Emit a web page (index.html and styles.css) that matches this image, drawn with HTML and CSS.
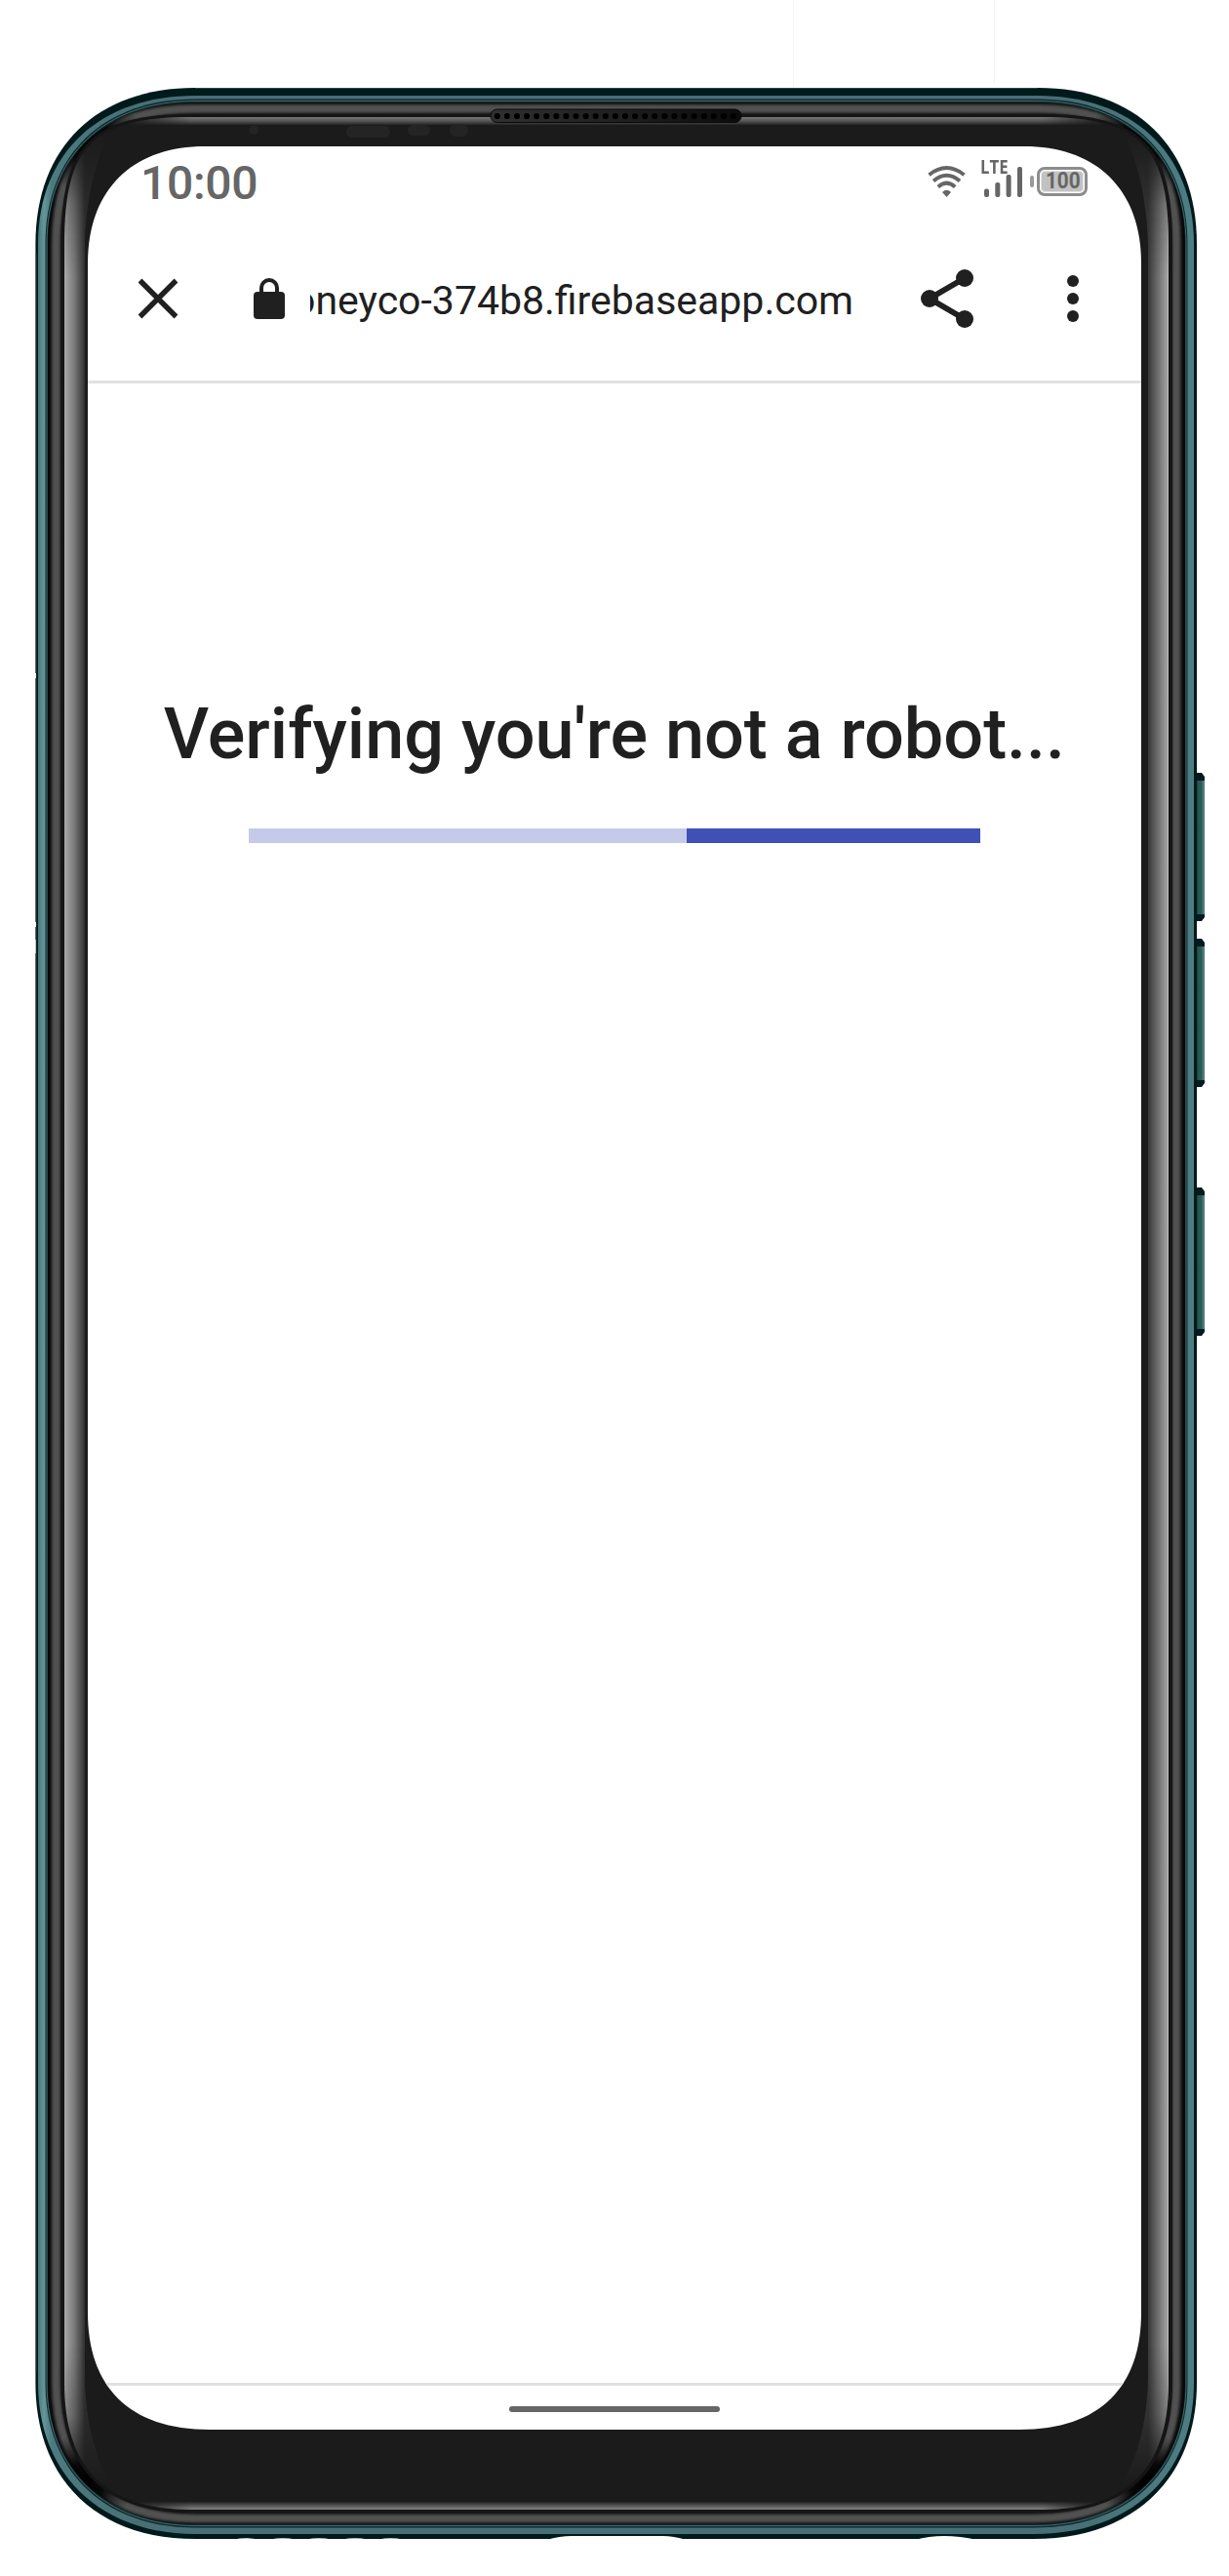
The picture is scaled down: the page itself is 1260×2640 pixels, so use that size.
FILE: index.html
```html
<!DOCTYPE html>
<html lang="en">
<head>
<meta charset="utf-8">
<title>Verification</title>
<link rel="stylesheet" href="styles.css">
</head>
<body>
<div class="stage">
  <svg class="device" viewBox="0 0 1260 2640" aria-hidden="true">
    <defs>
      <linearGradient id="teal" gradientUnits="userSpaceOnUse" x1="39" y1="0" x2="1224" y2="0">
        <stop offset="0" stop-color="#48777c"/><stop offset=".005" stop-color="#659599"/><stop offset=".012" stop-color="#4c7a7f"/><stop offset=".09" stop-color="#476f75"/><stop offset=".9" stop-color="#476f75"/><stop offset="1" stop-color="#4d7e84"/>
      </linearGradient>
      <linearGradient id="sideL" gradientUnits="userSpaceOnUse" x1="66" y1="0" x2="87" y2="0">
        <stop offset="0" stop-color="#aaa"/><stop offset=".5" stop-color="#777"/><stop offset="1" stop-color="#303030"/>
      </linearGradient>
      <linearGradient id="sideR" gradientUnits="userSpaceOnUse" x1="1177" y1="0" x2="1198" y2="0">
        <stop offset="0" stop-color="#383838"/><stop offset=".5" stop-color="#707070"/><stop offset=".93" stop-color="#a0a0a0"/><stop offset="1" stop-color="#c4c4c4"/>
      </linearGradient>
      <linearGradient id="topHi" gradientUnits="userSpaceOnUse" x1="0" y1="120" x2="0" y2="128">
        <stop offset="0" stop-color="#777"/><stop offset=".5" stop-color="#565656"/><stop offset="1" stop-color="#242424"/>
      </linearGradient>
      <linearGradient id="botHi" gradientUnits="userSpaceOnUse" x1="0" y1="2564" x2="0" y2="2572">
        <stop offset="0" stop-color="#242424"/><stop offset=".5" stop-color="#565656"/><stop offset="1" stop-color="#848484"/>
      </linearGradient>
      <linearGradient id="fadeY" gradientUnits="userSpaceOnUse" x1="0" y1="138" x2="0" y2="2548">
        <stop offset="0" stop-color="#000"/><stop offset=".03" stop-color="#bbb"/><stop offset=".06" stop-color="#fff"/><stop offset=".94" stop-color="#fff"/><stop offset=".97" stop-color="#bbb"/><stop offset="1" stop-color="#000"/>
      </linearGradient>
      <linearGradient id="fadeX" gradientUnits="userSpaceOnUse" x1="125" y1="0" x2="1139" y2="0">
        <stop offset="0" stop-color="#000"/><stop offset=".07" stop-color="#fff"/><stop offset=".93" stop-color="#fff"/><stop offset="1" stop-color="#000"/>
      </linearGradient>
      <linearGradient id="key" x1="0" y1="0" x2="1" y2="0">
        <stop offset="0" stop-color="#1b4442"/><stop offset=".3" stop-color="#2a5a53"/><stop offset=".65" stop-color="#2a5a53"/><stop offset=".8" stop-color="#54857b"/><stop offset="1" stop-color="#417268"/>
      </linearGradient>
      <linearGradient id="grille" x1="0" y1="0" x2="1" y2="0">
        <stop offset="0" stop-color="#303030"/><stop offset=".5" stop-color="#202020"/><stop offset="1" stop-color="#0b0b0b"/>
      </linearGradient>
      <radialGradient id="dark"><stop offset="0" stop-color="#000"/><stop offset=".4" stop-color="#000" stop-opacity=".9"/><stop offset="1" stop-color="#000" stop-opacity="0"/></radialGradient>
      <mask id="maskY" maskUnits="userSpaceOnUse" x="0" y="0" width="1260" height="2640"><path fill="url(#fadeY)" d="M0 0H1260V2640H0Z"/></mask>
      <mask id="maskX" maskUnits="userSpaceOnUse" x="0" y="0" width="1260" height="2640"><path fill="url(#fadeX)" d="M0 0H1260V2640H0Z"/></mask>
      <filter id="soft" filterUnits="userSpaceOnUse" x="0" y="0" width="1260" height="2640"><feGaussianBlur stdDeviation="1.8"/></filter>
      <clipPath id="band"><path d="M49 250C49 160 108 105 200 105H1064C1155 105 1215 160 1215 250V2442C1215 2531 1155 2587 1060 2587H200C109 2587 49 2531 49 2442Z"/></clipPath>
      <clipPath id="glass"><path d="M66 250C66 150 94 120 196 120H1068C1170 120 1198 150 1198 250V2442C1198 2526 1160 2572 1068 2572H196C104 2572 66 2526 66 2442Z"/></clipPath>
    </defs>

    <path class="seam" d="M813.500 0V90M1019.500 0V86"/>

    <g id="keys">
      <path fill="#041b1d" d="M1226 792h6l3 4v144l-3 4h-6zM1226 962h6l3 4v144l-3 4h-6zM1226 1217h6l3 4v144l-3 4h-6z"/>
      <path fill="url(#key)" d="M1227 800h8v137h-8zM1227 970h8v137h-8zM1227 1225h8v137h-8z"/>
    </g>

    <path fill="#00191b" d="M36.400 250C36.400 150 100 90 200 90H1064C1164 90 1227 150 1227 250V2442C1227 2542 1160 2602 1060 2602H200C100 2602 36.400 2542 36.400 2442Z"/>
    <path fill="none" stroke="#3f696b" stroke-width="1" opacity=".6" d="M200 90.500H1064M36.900 260V2432"/>
    <path fill="url(#teal)" d="M39 250C39 155 104 98 200 98H1064C1159 98 1224 155 1224 250V2442C1224 2538 1158 2597 1060 2597H200C105 2597 39 2538 39 2442Z"/>
    <path fill="#102b2e" d="M46.500 250C46.500 158 106 101.500 200 101.500H1064C1157 101.500 1217.500 158 1217.500 250V2442C1217.500 2533 1157 2590.500 1060 2590.500H200C107 2590.500 46.500 2533 46.500 2442Z"/>
    <path fill="none" stroke="#42666a" stroke-width="1" d="M48 250C48 159 107 103.500 200 103.500H1064C1156 103.500 1216 159 1216 250V2442C1216 2532 1156 2588.500 1060 2588.500H200C108 2588.500 48 2532 48 2442Z"/>
    <path fill="#080808" d="M49 250C49 160 108 105 200 105H1064C1155 105 1215 160 1215 250V2442C1215 2531 1155 2587 1060 2587H200C109 2587 49 2531 49 2442Z"/>
    <g clip-path="url(#band)">
      <path fill="none" stroke="#515151" stroke-width="9" filter="url(#soft)" d="M57.500 250C57.500 158 104 111.500 200 111.500H1064C1160 111.500 1206 158 1206 250V2442C1206 2527 1157 2581 1060 2581H200C105 2581 57.500 2527 57.500 2442Z"/>
      <g fill="url(#dark)">
        <circle cx="88" cy="141" r="56"/><circle cx="1174" cy="141" r="56"/>
        <circle cx="86" cy="2544" r="50"/><circle cx="1178" cy="2544" r="50"/>
      </g>
    </g>
    <path fill="#151515" d="M62.500 250C62.500 149 93 117 196 117H1068C1171 117 1202 149 1202 250V2442C1202 2527 1162 2575 1068 2575H196C102 2575 62.500 2527 62.500 2442Z"/>
    <g clip-path="url(#glass)">
      <path fill="#1b1b1b" d="M60 110H1210V2580H60Z"/>
      <g mask="url(#maskY)">
        <path fill="url(#sideL)" d="M60 120H122C98 155 87 205 87 260V2432C87 2480 98 2523 116 2548H60Z"/>
        <path fill="url(#sideR)" d="M1204 120H1142C1166 155 1177 205 1177 260V2432C1177 2480 1166 2523 1148 2548H1204Z"/>
      </g>
      <g mask="url(#maskX)">
        <path fill="url(#topHi)" d="M125 118H1139V128H125Z"/>
        <path fill="url(#botHi)" d="M125 2564H1139V2575H125Z"/>
      </g>
    </g>

    <rect x="503" y="112" width="257" height="13.500" rx="6.500" fill="url(#grille)" stroke="#0b0b0b"/>
    <path class="holes" d="M509.800 119H753"/>
    <g fill="#242424">
      <circle cx="260.300" cy="133.300" r="4.700"/>
      <rect x="355" y="129" width="45" height="12" rx="6"/><rect x="418" y="128" width="23" height="11" rx="5.500"/><rect x="461" y="127.500" width="19" height="12.500" rx="6"/>
    </g>
    <g fill="#fff">
      <path d="M560 2603Q574 2599 586 2599H680Q690 2599 704 2603Z"/>
      <path d="M938 2603Q952 2599 968 2599T1002 2603Z"/>
      <path d="M240 2602.500Q252 2600 265 2602.500ZM277 2602.500Q290 2600 303 2602.500ZM314 2602.500Q327 2600 340 2602.500ZM351 2602.500Q364 2600 377 2602.500ZM388 2602.500Q401 2600 413 2602.500Z"/>
      <path d="M35 690h2v5h-2zM35 945h2v5h-2zM35 963h1.600v14H35z"/>
    </g>
    <path fill="#fff" d="M90 270C90 195 135 150 210 150H1050C1125 150 1170 195 1170 270V2370C1170 2446 1128 2490 1045 2490H215C132 2490 90 2446 90 2370Z"/>
  </svg>

  <main class="screen">
    <header class="status">
      <span class="clock">10:00</span>
      <div class="indicators">
        <svg class="wifi" viewBox="0 0 40 34"><g fill="none" stroke="#666" stroke-width="3.900"><path d="M1.500 9.200Q19.500-5 37.500 9.200"/><path d="M6 15.400Q19.500 4 33 15.400"/><path d="M10.800 21.600Q19.500 13.600 28.200 21.600"/></g><path fill="#666" d="M15 27Q19.500 22.500 24 27L19.500 32Z"/></svg>
        <div class="cell">
          <span class="lte">LTE</span>
          <svg class="bars" viewBox="0 0 40 32"><g fill="#666"><rect x="0" y="22.500" width="5" height="8.500" rx="2"/><rect x="11.300" y="16" width="5" height="15" rx="2"/><rect x="22.600" y="8" width="5" height="23" rx="2"/><rect x="34" y="0" width="5" height="31" rx="2"/></g></svg>
        </div>
        <div class="battery"><span class="tip"></span><span class="case"><span class="level"><span class="charge">100</span></span></span></div>
      </div>
    </header>
    <nav class="toolbar">
      <svg class="close" viewBox="0 0 42 42"><path d="M2.500 2.500 39.500 39.500M39.500 2.500 2.500 39.500" stroke="#202020" stroke-width="5.400" fill="none"/></svg>
      <svg class="lock" viewBox="0 0 32 42"><rect y="14" width="32" height="28" rx="4" fill="#202020"/><path d="M8 15V10a8 8 0 0 1 16 0v5" fill="none" stroke="#202020" stroke-width="4"/></svg>
      <div class="address"><span>oneyco-374b8.firebaseapp.com</span></div>
      <svg class="share" viewBox="0 0 54 60"><path d="M45 9 9 30 45 51" fill="none" stroke="#202020" stroke-width="6"/><g fill="#202020"><circle cx="45" cy="9" r="9"/><circle cx="9" cy="30" r="9"/><circle cx="45" cy="51" r="9"/></g></svg>
      <svg class="more" viewBox="0 0 12 48"><g fill="#202020"><circle cx="6" cy="6" r="6"/><circle cx="6" cy="24" r="6"/><circle cx="6" cy="42" r="6"/></g></svg>
    </nav>
    <section class="content">
      <h1>Verifying you're not a robot...</h1>
      <div class="progress"><div class="progress-fill"></div></div>
    </section>
    <footer class="gesture"><span class="handle"></span></footer>
  </main>
</div>
</body>
</html>
```
FILE: styles.css
```css
* { box-sizing: border-box; }
body { margin: 0; background: #fff; font-family: Roboto, "Liberation Sans", sans-serif; color: #202020; }
svg { display: block; flex: none; }
.stage { position: relative; width: 1260px; height: 2640px; padding: 150px 90px; overflow: hidden; }
.device { position: absolute; left: 0; top: 0; width: 1260px; height: 2640px; }
.seam { stroke: #f6f6f6; stroke-width: 1; }
.holes { fill: none; stroke: #000; stroke-width: 6.2; stroke-linecap: round; stroke-dasharray: 0 10.09; }

.screen { position: relative; width: 1080px; height: 2340px; display: flex; flex-direction: column; clip-path: path("M0 120C0 45 45 0 120 0H960C1035 0 1080 45 1080 120V2220C1080 2296 1038 2340 955 2340H125C42 2340 0 2296 0 2220Z"); }

.status { height: 72px; padding: 0 55px 0 54px; display: flex; justify-content: space-between; align-items: flex-start; }
.clock { font-size: 48px; line-height: 58px; font-weight: 500; letter-spacing: -.3px; color: #666; padding-top: 9px; }
.indicators { display: flex; align-items: flex-start; }
.wifi { width: 40px; height: 34px; margin-top: 20px; }
.cell { width: 45px; height: 52px; margin-left: 14px; padding-top: 12px; }
.lte { display: block; height: 9px; font: 700 20px/17px "Open Sans", sans-serif; color: #666; transform: scaleX(.84); transform-origin: left; }
.bars { width: 40px; height: 32px; margin-left: 4px; }
.battery { display: flex; align-items: center; gap: 3px; margin: 21px 0 0 6px; height: 30px; }
.tip { width: 4px; height: 12px; border-radius: 2px; background: #999; }
.case { width: 52px; height: 30px; padding: 1px; border: 3px solid #8c8c8c; border-radius: 8px; display: flex; }
.level { flex: 1; border-radius: 4px; background: #c2c2c2; border: 1px solid #e4e4e4; display: flex; justify-content: center; }
.charge { font-size: 23px; line-height: 20px; font-weight: 700; color: #666; transform: translateX(1px) scaleX(.9); }

.toolbar { height: 171px; border-bottom: 3px solid #e0e2df; display: flex; align-items: center; padding: 0 63px 0 51px; }
.close { width: 42px; height: 42px; }
.lock { width: 32px; height: 42px; margin: -1px 0 0 77px; }
.address { width: 557px; margin: 4px 0 0 26px; overflow: hidden; display: flex; justify-content: flex-end; font-size: 41px; line-height: 54px; white-space: nowrap; }
.share { width: 54px; height: 60px; margin-left: 69px; }
.more { width: 12px; height: 48px; margin-left: 96px; }

.content { flex: 1; padding-top: 317px; display: flex; flex-direction: column; align-items: center; }
h1 { margin: 0; font-size: 72px; line-height: 86px; font-weight: 500; white-space: nowrap; }
.progress { width: 750px; height: 15px; margin-top: 53px; background: #c6cae9; display: flex; justify-content: flex-end; }
.progress-fill { width: 301px; background: #3f51b5; }
.gesture { height: 48px; border-top: 3px solid #e0e2df; display: flex; justify-content: center; padding-top: 21px; }
.handle { width: 216px; height: 6px; border-radius: 3px; background: #666; }
```
